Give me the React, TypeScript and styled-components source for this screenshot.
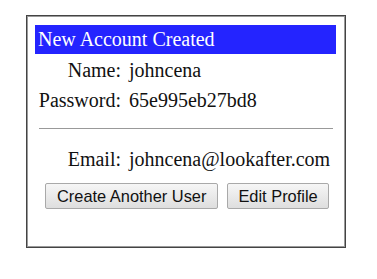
import React from "react";
import styled, { createGlobalStyle } from "styled-components";

const Global = createGlobalStyle`
  html, body { margin: 0; padding: 0; background: #ffffff; }
  body { font-family: "Liberation Serif", "Times New Roman", serif; }
`;

const Page = styled.div`
  padding: 15px 0 0 26px;
`;

const Card = styled.div`
  box-sizing: border-box;
  width: 320px;
  height: 233px;
  border: 1px solid #444444;
  box-shadow: inset 0 0 0 1px #9a9a9a;
  padding: 9px 9px 0 8px;
  display: flex;
  flex-direction: column;
`;

const Header = styled.div`
  height: 29px;
  line-height: 29px;
  background: #2424ff;
  color: #ffffff;
  font-size: 20px;
  padding-left: 3px;
`;

const Fields = styled.div<{ $top: number }>`
  display: grid;
  grid-template-columns: 86px 1fr;
  grid-auto-rows: 30px;
  column-gap: 8px;
  align-items: center;
  margin-top: ${(p) => p.$top}px;
  font-size: 20px;
  color: #111111;
`;

const Label = styled.div`
  text-align: right;
`;

const Value = styled.div`
  white-space: nowrap;
`;

const Divider = styled.div`
  height: 1px;
  background: #999999;
  margin: 13px 3px 0 4px;
`;

const Actions = styled.div`
  display: flex;
  gap: 9px;
  margin: 9px 0 0 10px;
`;

const Button = styled.button<{ $pad?: number }>`
  box-sizing: border-box;
  height: 26px;
  padding: 0 ${(p) => p.$pad ?? 10}px;
  font-family: "Liberation Sans", Arial, sans-serif;
  font-size: 16.4px;
  color: #111111;
  background: linear-gradient(#f6f6f6, #dedede);
  border: 1px solid #a9a9a9;
  border-radius: 2px;
`;

export default function App() {
  return (
    <>
      <Global />
      <Page>
        <Card>
          <Header>New Account Created</Header>
          <Fields $top={1}>
            <Label>Name:</Label>
            <Value>johncena</Value>
            <Label>Password:</Label>
            <Value>65e995eb27bd8</Value>
          </Fields>
          <Divider />
          <Fields $top={15}>
            <Label>Email:</Label>
            <Value>johncena@lookafter.com</Value>
          </Fields>
          <Actions>
            <Button $pad={11}>Create Another User</Button>
            <Button>Edit Profile</Button>
          </Actions>
        </Card>
      </Page>
    </>
  );
}
